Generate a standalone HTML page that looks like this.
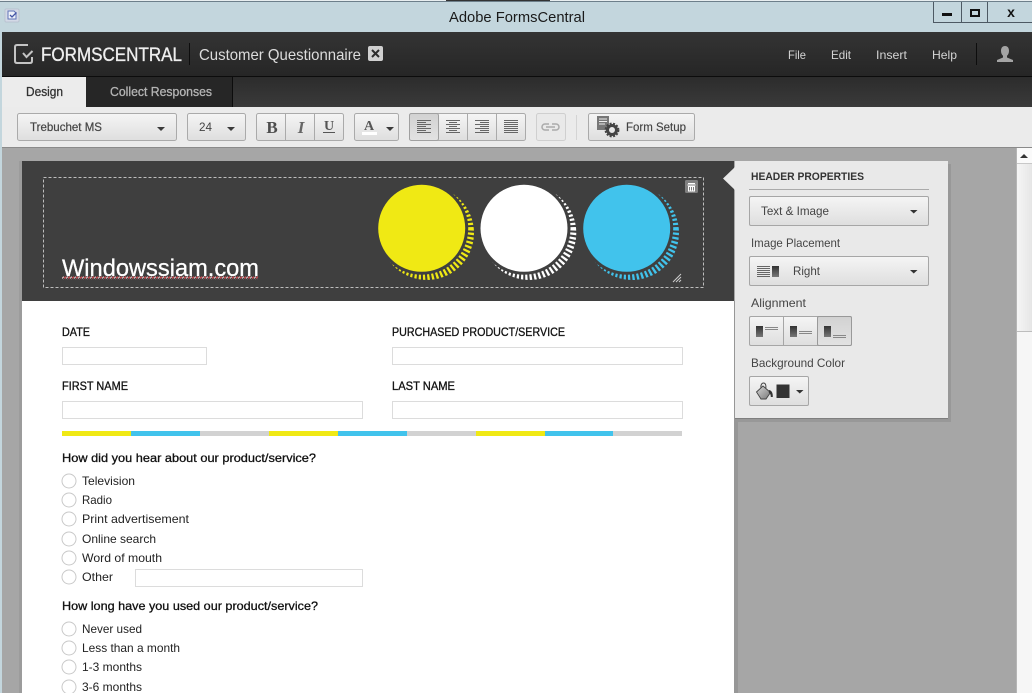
<!DOCTYPE html>
<html><head><meta charset="utf-8"><title>Adobe FormsCentral</title>
<style>
html,body{margin:0;padding:0;width:1032px;height:693px;overflow:hidden;background:#a6a6a6}
svg{display:block}
text{font-family:"Liberation Sans",sans-serif;white-space:pre}
.ui{font-size:12px;fill:#444}
</style></head><body>
<svg width="1032" height="693" viewBox="0 0 1032 693" xmlns="http://www.w3.org/2000/svg">
<defs>
<linearGradient id="btn" x1="0" y1="0" x2="0" y2="1"><stop offset="0" stop-color="#f5f5f5"/><stop offset="1" stop-color="#dedede"/></linearGradient>
<linearGradient id="prs" x1="0" y1="0" x2="0" y2="1"><stop offset="0" stop-color="#d2d2d2"/><stop offset="1" stop-color="#e2e2e2"/></linearGradient>
<linearGradient id="hd" x1="0" y1="0" x2="0" y2="1"><stop offset="0" stop-color="#343434"/><stop offset="1" stop-color="#262626"/></linearGradient>
<linearGradient id="tb" x1="0" y1="0" x2="0" y2="1"><stop offset="0" stop-color="#2c2c2c"/><stop offset="1" stop-color="#3a3a3a"/></linearGradient>
<linearGradient id="bar" x1="0" y1="0" x2="1" y2="0"><stop offset="0" stop-color="#f6f6f6"/><stop offset="1" stop-color="#e6e6e6"/></linearGradient>
<linearGradient id="ic" x1="0" y1="0" x2="0" y2="1"><stop offset="0" stop-color="#333"/><stop offset="1" stop-color="#777"/></linearGradient>
<linearGradient id="bk" x1="0" y1="0" x2="1" y2="1"><stop offset="0" stop-color="#d8d8d8"/><stop offset="1" stop-color="#777"/></linearGradient>
<pattern id="sq" width="4" height="3" patternUnits="userSpaceOnUse"><path d="M0 2.500L2 .5" stroke="#e8484f" stroke-width="1"/><path d="M2 2.500L4 .5" stroke="#f0d0d0" stroke-width="1"/></pattern>
<mask id="m1" maskUnits="userSpaceOnUse" x="360" y="170" width="130" height="120"><circle cx="427" cy="233" r="47" fill="#fff"/><circle cx="421.700" cy="228.300" r="46.500" fill="#000"/></mask>
<mask id="m2" maskUnits="userSpaceOnUse" x="460" y="170" width="130" height="120"><circle cx="529.300" cy="233" r="47" fill="#fff"/><circle cx="524" cy="228.300" r="46.500" fill="#000"/></mask>
<mask id="m3" maskUnits="userSpaceOnUse" x="560" y="170" width="130" height="120"><circle cx="632" cy="233" r="47" fill="#fff"/><circle cx="626.700" cy="228.300" r="46.500" fill="#000"/></mask>
</defs>

<!-- title bar -->
<rect width="1032" height="693" fill="#c3d6dd"/>
<rect x="0" y="0" width="1032" height="1" fill="#e8eef0"/>
<rect x="0" y="1" width="1032" height="1" fill="#6d7f8a"/>
<rect x="446" y="0" width="104" height="1" fill="#333"/>
<rect x="5" y="9" width="14" height="13" rx="1" fill="#d3d9e6" stroke="#b4bccb" stroke-width=".7"/>
<path d="M8 11h6l2 2v6H8z" fill="#eef1f9" stroke="#6072b8"/>
<path d="M10 15l2 2 4.500-4.500" fill="none" stroke="#4253a4" stroke-width="1.300"/>
<text x="449" y="22" font-size="15" fill="#1a1a1a" textLength="136" lengthAdjust="spacingAndGlyphs">Adobe FormsCentral</text>
<path d="M933.500 2v20.500h99M961.500 2v20.500M987.500 2v20.500" fill="none" stroke="#4d5963" stroke-width="1"/>
<rect x="942" y="13" width="10" height="3" fill="#111"/>
<rect x="971" y="10" width="8" height="6" fill="none" stroke="#111" stroke-width="2"/>
<text x="1011" y="17" font-size="14" font-weight="bold" fill="#111" text-anchor="middle">x</text>

<!-- app header -->
<rect x="2" y="32" width="1030" height="44" fill="url(#hd)"/>
<rect x="2" y="76" width="1030" height="1" fill="#0c0c0c"/>
<path d="M28 45H17q-2 0-2 2v14q0 2 2 2h13q2 0 2-2v-4" fill="none" stroke="#c4c4c4" stroke-width="2"/>
<path d="M23 53l3.500 4 6-6" fill="none" stroke="#c4c4c4" stroke-width="2"/>
<text x="41" y="61" font-size="19" fill="#eee" stroke="#eee" stroke-width=".35" textLength="141" lengthAdjust="spacingAndGlyphs">FORMSCENTRAL</text>
<rect x="189" y="43" width="1" height="22" fill="#0d0d0d"/>
<text x="199" y="60" font-size="16" fill="#dcdcdc" textLength="162" lengthAdjust="spacingAndGlyphs">Customer Questionnaire</text>
<rect x="368" y="46" width="15" height="15" rx="2" fill="#d0d0d0"/>
<path d="M372 50l7 7M379 50l-7 7" stroke="#2c2c2c" stroke-width="2"/>
<g font-size="12" fill="#d4d4d4">
<text x="788" y="59" textLength="18" lengthAdjust="spacingAndGlyphs">File</text>
<text x="831" y="59" textLength="20" lengthAdjust="spacingAndGlyphs">Edit</text>
<text x="876" y="59" textLength="31" lengthAdjust="spacingAndGlyphs">Insert</text>
<text x="932" y="59" textLength="25" lengthAdjust="spacingAndGlyphs">Help</text>
</g>
<rect x="976" y="43" width="1" height="22" fill="#0d0d0d"/>
<path d="M1005 46c2.800 0 4 2.200 4 4.800 0 2.200-.8 4-2 5v1.700l6 2.500v2h-16v-2l6-2.500v-1.700c-1.200-1-2-2.800-2-5 0-2.600 1.200-4.800 4-4.800z" fill="#a4a4a4"/>

<!-- tabs -->
<rect x="2" y="77" width="1030" height="30" fill="url(#tb)"/>
<rect x="86" y="77" width="146" height="30" fill="#262626"/>
<rect x="232" y="77" width="1" height="30" fill="#0c0c0c"/>
<rect x="2" y="77" width="84" height="30" fill="#ececec"/>
<text x="26" y="96" font-size="13" fill="#333" stroke="#333" stroke-width=".3" textLength="37" lengthAdjust="spacingAndGlyphs">Design</text>
<text x="110" y="96" font-size="13" fill="#b4b4b4" stroke="#b4b4b4" stroke-width=".3" textLength="102" lengthAdjust="spacingAndGlyphs">Collect Responses</text>

<!-- toolbar -->
<rect x="2" y="107" width="1030" height="40" fill="#ebebeb"/>
<rect x="2" y="147" width="1030" height="1" fill="#8a8a8a"/>
<rect x="2" y="148" width="1014" height="545" fill="#a6a6a6"/>
<g fill="url(#btn)" stroke="#aaa">
<rect x="17.500" y="113.500" width="159" height="27" rx="2"/>
<rect x="187.500" y="113.500" width="58" height="27" rx="2"/>
<rect x="256.500" y="113.500" width="87" height="27" rx="2"/>
<rect x="354.500" y="113.500" width="44" height="27" rx="2"/>
<rect x="409.500" y="113.500" width="116" height="27" rx="2"/>
<rect x="536.500" y="113.500" width="29" height="27" rx="2" fill="#e9e9e9" stroke="#cfcfcf"/>
<rect x="588.500" y="113.500" width="106" height="27" rx="2"/>
</g>
<rect x="410" y="114" width="28" height="26" fill="url(#prs)"/>
<rect x="409.500" y="113.500" width="29" height="27" rx="2" fill="none" stroke="#a0a0a0"/>
<path d="M285.500 114v26M314.500 114v26M467.500 114v26M496.500 114v26" stroke="#aaa"/>
<rect x="576" y="115" width="1" height="25" fill="#d4d4d4"/>
<text x="30" y="131" class="ui" stroke="#444" stroke-width=".2" textLength="72" lengthAdjust="spacingAndGlyphs">Trebuchet MS</text>
<text x="199" y="131" class="ui" textLength="13" lengthAdjust="spacingAndGlyphs">24</text>
<g fill="#3a3a3a">
<path d="M157 127h8l-4 4z"/><path d="M227 127h8l-4 4z"/><path d="M386 127h8l-4 4z"/>
</g>
<text x="272" y="133" font-size="17" font-weight="bold" text-anchor="middle" fill="#4d4d4d" style="font-family:'Liberation Serif',serif">B</text>
<text x="301" y="133" font-size="17" font-weight="bold" font-style="italic" text-anchor="middle" fill="#666" style="font-family:'Liberation Serif',serif">I</text>
<text x="329" y="130" font-size="14" font-weight="bold" text-anchor="middle" fill="#555" style="font-family:'Liberation Serif',serif">U</text>
<rect x="323" y="132" width="12" height="1" fill="#555"/>
<text x="369" y="130" font-size="14" font-weight="bold" text-anchor="middle" fill="#555" style="font-family:'Liberation Serif',serif">A</text>
<rect x="362" y="132" width="15" height="3" fill="#fff"/>
<!-- align icons -->
<g stroke="#666" stroke-width="1" fill="none">
<path d="M417 120.500h14M417 122.500h9M417 124.500h14M417 126.500h9M417 128.500h14M417 130.500h9M417 132.500h14"/>
<path d="M446 120.500h14M449 122.500h8M446 124.500h14M449 126.500h8M446 128.500h14M449 130.500h8M446 132.500h14"/>
<path d="M475 120.500h14M480 122.500h9M475 124.500h14M480 126.500h9M475 128.500h14M480 130.500h9M475 132.500h14"/>
<path d="M504 120.500h14M504 122.500h14M504 124.500h14M504 126.500h14M504 128.500h14M504 130.500h14M504 132.500h14"/>
</g>
<path d="M549 124h-4a3 3 0 0 0 0 6h4M552 124h4a3 3 0 0 1 0 6h-4M546 127h9" fill="none" stroke="#aaa" stroke-width="1.500"/>
<rect x="597" y="116" width="12" height="14" fill="#777"/>
<path d="M599 119h8M599 121.500h8M599 124h6" stroke="#eee"/>
<circle cx="612" cy="130" r="4.500" fill="none" stroke="#444" stroke-width="3"/>
<circle cx="612" cy="130" r="6.500" fill="none" stroke="#444" stroke-width="1.800" stroke-dasharray="2 1.500"/>
<text x="626" y="131" font-size="11.500" fill="#444" stroke="#444" stroke-width=".15" textLength="60" lengthAdjust="spacingAndGlyphs">Form Setup</text>

<!-- scrollbar -->
<rect x="1016" y="148" width="16" height="545" fill="#f6f6f6"/>
<rect x="1016" y="148" width="16" height="15" fill="#fafafa"/>
<rect x="1016" y="163" width="16" height="168" fill="url(#bar)"/>
<rect x="1016" y="331" width="16" height="1" fill="#bdbdbd"/>
<rect x="1016" y="163" width="16" height="1" fill="#c8c8c8"/>
<rect x="1016" y="148" width="1" height="545" fill="#b5b5b5"/>
<path d="M1020 158l4-4 4 4z" fill="#333"/>

<!-- form -->
<rect x="19" y="161" width="3" height="532" fill="#9c9c9c"/>
<rect x="734" y="301" width="4" height="392" fill="#979797"/>
<rect x="22" y="161" width="712" height="532" fill="#fff"/>
<rect x="22" y="161" width="712" height="140" fill="#3f3f3f"/>
<rect x="43.500" y="177.500" width="660" height="110" fill="none" stroke="#bdbdbd" stroke-dasharray="3 2"/>
<circle cx="421.700" cy="228.300" r="50" fill="none" stroke="#f0e914" stroke-width="14" stroke-dasharray="2.300 2.100" mask="url(#m1)"/>
<circle cx="524" cy="228.300" r="50" fill="none" stroke="#fff" stroke-width="14" stroke-dasharray="2.300 2.100" mask="url(#m2)"/>
<circle cx="626.700" cy="228.300" r="50" fill="none" stroke="#41c3ec" stroke-width="14" stroke-dasharray="2.300 2.100" mask="url(#m3)"/>
<circle cx="421.700" cy="228.300" r="43.500" fill="#f0e914"/>
<circle cx="524" cy="228.300" r="43.500" fill="#fff"/>
<circle cx="626.700" cy="228.300" r="43.500" fill="#41c3ec"/>
<rect x="685" y="180" width="13" height="13" rx="1.500" fill="#808080"/>
<path d="M688 183.500h7M687.500 185h8M688.500 186.500h6v4.500h-6zM690.500 186.500v4.500M692.500 186.500v4.500" fill="none" stroke="#fff" stroke-width="1"/>
<path d="M673 282l8-8M676 282l5-5M679 282l2-2" stroke="#ccc" stroke-width="1"/>
<text x="62" y="276" font-size="24" fill="#fff" stroke="#fff" stroke-width=".3" textLength="197" lengthAdjust="spacingAndGlyphs">Windowssiam.com</text>
<rect x="62" y="276.500" width="196" height="3" fill="url(#sq)"/>

<g fill="#fff" stroke="#dcdcdc">
<rect x="62.500" y="347.500" width="144" height="17"/>
<rect x="392.500" y="347.500" width="290" height="17"/>
<rect x="62.500" y="401.500" width="300" height="17"/>
<rect x="392.500" y="401.500" width="290" height="17"/>
<rect x="135.500" y="569.500" width="227" height="17"/>
</g>
<g font-size="12" fill="#111" stroke="#111" stroke-width=".3">
<text x="62" y="336" textLength="28" lengthAdjust="spacingAndGlyphs">DATE</text>
<text x="392" y="336" textLength="173" lengthAdjust="spacingAndGlyphs">PURCHASED PRODUCT/SERVICE</text>
<text x="62" y="390" textLength="66" lengthAdjust="spacingAndGlyphs">FIRST NAME</text>
<text x="392" y="390" textLength="63" lengthAdjust="spacingAndGlyphs">LAST NAME</text>
<text x="62" y="462" textLength="254" lengthAdjust="spacingAndGlyphs">How did you hear about our product/service?</text>
<text x="62" y="610" textLength="256" lengthAdjust="spacingAndGlyphs">How long have you used our product/service?</text>
</g>
<rect x="62" y="431" width="69" height="5" fill="#f0e914"/>
<rect x="131" y="431" width="69" height="5" fill="#41c3ec"/>
<rect x="200" y="431" width="69" height="5" fill="#d2d2d2"/>
<rect x="269" y="431" width="69" height="5" fill="#f0e914"/>
<rect x="338" y="431" width="69" height="5" fill="#41c3ec"/>
<rect x="407" y="431" width="69" height="5" fill="#d2d2d2"/>
<rect x="476" y="431" width="69" height="5" fill="#f0e914"/>
<rect x="545" y="431" width="68" height="5" fill="#41c3ec"/>
<rect x="613" y="431" width="69" height="5" fill="#d2d2d2"/>

<g fill="#fff" stroke="#c9c9c9">
<circle cx="69" cy="481" r="7"/><circle cx="69" cy="500" r="7"/><circle cx="69" cy="519" r="7"/><circle cx="69" cy="539" r="7"/><circle cx="69" cy="558" r="7"/><circle cx="69" cy="577" r="7"/>
<circle cx="69" cy="629" r="7"/><circle cx="69" cy="648" r="7"/><circle cx="69" cy="667" r="7"/><circle cx="69" cy="687" r="7"/>
</g>
<g font-size="12" fill="#222">
<text x="82" y="485" textLength="53" lengthAdjust="spacingAndGlyphs">Television</text>
<text x="82" y="504" textLength="30" lengthAdjust="spacingAndGlyphs">Radio</text>
<text x="82" y="523" textLength="107" lengthAdjust="spacingAndGlyphs">Print advertisement</text>
<text x="82" y="543" textLength="74" lengthAdjust="spacingAndGlyphs">Online search</text>
<text x="82" y="562" textLength="80" lengthAdjust="spacingAndGlyphs">Word of mouth</text>
<text x="82" y="581" textLength="31" lengthAdjust="spacingAndGlyphs">Other</text>
<text x="82" y="633" textLength="60" lengthAdjust="spacingAndGlyphs">Never used</text>
<text x="82" y="652" textLength="98" lengthAdjust="spacingAndGlyphs">Less than a month</text>
<text x="82" y="671" textLength="60" lengthAdjust="spacingAndGlyphs">1-3 months</text>
<text x="82" y="691" textLength="60" lengthAdjust="spacingAndGlyphs">3-6 months</text>
</g>

<!-- properties panel -->
<rect x="738" y="164" width="213" height="258" fill="#8f8f8f" opacity=".6"/>
<rect x="735" y="161" width="213" height="258" fill="#e9e9e9"/>
<rect x="735" y="418" width="213" height="1" fill="#7f7f7f"/>
<path d="M735 167l-12 11.500L735 190z" fill="#e9e9e9"/>
<text x="751" y="180" font-size="11" font-weight="bold" fill="#333" textLength="113" lengthAdjust="spacingAndGlyphs">HEADER PROPERTIES</text>
<rect x="749" y="189" width="180" height="1" fill="#aaa"/>
<g fill="url(#btn)" stroke="#a6a6a6">
<rect x="749.500" y="196.500" width="179" height="29" rx="1.500"/>
<rect x="749.500" y="256.500" width="179" height="29" rx="1.500"/>
<rect x="749.500" y="316.500" width="102" height="29" rx="1.500"/>
<rect x="749.500" y="376.500" width="59" height="29" rx="1.500"/>
</g>
<rect x="818" y="317" width="33" height="28" fill="url(#prs)"/>
<rect x="817.500" y="316.500" width="34" height="29" rx="1.500" fill="none" stroke="#999"/>
<rect x="783" y="317" width="1" height="28" fill="#a6a6a6"/>
<g font-size="12" fill="#444">
<text x="761" y="215" textLength="68" lengthAdjust="spacingAndGlyphs">Text &amp; Image</text>
<text x="751" y="247" textLength="89" lengthAdjust="spacingAndGlyphs">Image Placement</text>
<text x="793" y="275" textLength="27" lengthAdjust="spacingAndGlyphs">Right</text>
<text x="751" y="307" textLength="55" lengthAdjust="spacingAndGlyphs">Alignment</text>
<text x="751" y="367" textLength="94" lengthAdjust="spacingAndGlyphs">Background Color</text>
</g>
<path d="M910 210h7.500l-3.750 3.500z" fill="#333"/>
<path d="M910 270h7.500l-3.750 3.500z" fill="#333"/>
<path d="M796 390h7.500l-3.750 3.500z" fill="#333"/>
<path d="M757 266.500h13M757 268.500h13M757 270.500h13M757 272.500h13M757 274.500h13M757 276.500h13" stroke="#666"/>
<rect x="772" y="266" width="7" height="11" fill="url(#ic)"/>
<rect x="756" y="326" width="7" height="11" fill="url(#ic)"/>
<path d="M765 327.500h13M765 329.500h13" stroke="#888"/>
<rect x="790" y="326" width="7" height="11" fill="url(#ic)"/>
<path d="M799 331.500h13M799 333.500h13" stroke="#888"/>
<rect x="824" y="326" width="7" height="11" fill="url(#ic)"/>
<path d="M833 335.500h13M833 337.500h13" stroke="#888"/>
<path d="M756.500 392l6.500-6 7.500 6.500-4.500 6.500-5 0z" fill="url(#bk)" stroke="#444" stroke-width=".9"/>
<path d="M761 388c-.5-3 .8-5 2.500-5s2.800 2 2.300 5" fill="none" stroke="#444" stroke-width="1"/>
<path d="M769 390c2.500.5 4 2.500 3.800 7h-2c0-2-.5-3.500-2-4.500z" fill="#333"/>
<rect x="776.500" y="384.500" width="13" height="13.500" fill="#333"/>
</svg>
</body></html>
